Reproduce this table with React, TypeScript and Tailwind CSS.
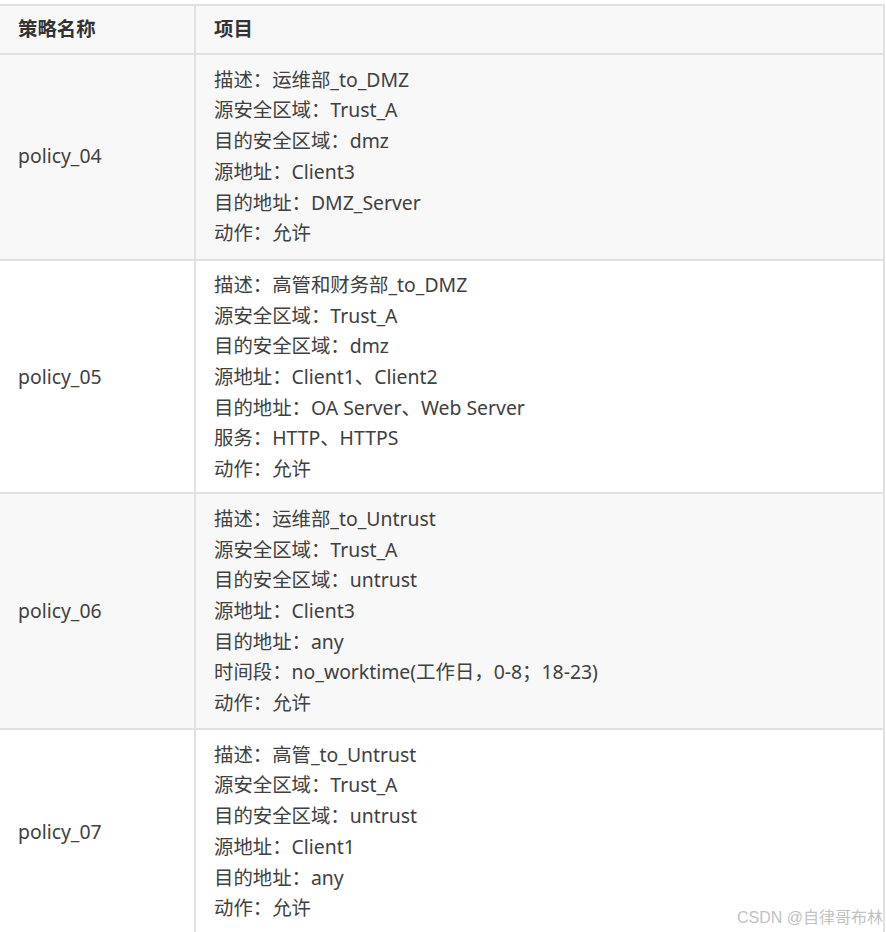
const rows = [
  {
    name: 'policy_04',
    pad: 'pt-[10px] pb-[10px]',
    items: [
      '描述：运维部_to_DMZ',
      '源安全区域：Trust_A',
      '目的安全区域：dmz',
      '源地址：Client3',
      '目的地址：DMZ_Server',
      '动作：允许',
    ],
  },
  {
    name: 'policy_05',
    pad: 'pt-[9px] pb-[7px]',
    items: [
      '描述：高管和财务部_to_DMZ',
      '源安全区域：Trust_A',
      '目的安全区域：dmz',
      '源地址：Client1、Client2',
      '目的地址：OA Server、Web Server',
      '服务：HTTP、HTTPS',
      '动作：允许',
    ],
  },
  {
    name: 'policy_06',
    pad: 'pt-[10px] pb-[9px]',
    items: [
      '描述：运维部_to_Untrust',
      '源安全区域：Trust_A',
      '目的安全区域：untrust',
      '源地址：Client3',
      '目的地址：any',
      '时间段：no_worktime(工作日，0-8；18-23)',
      '动作：允许',
    ],
  },
  {
    name: 'policy_07',
    pad: 'pt-[10px] pb-[9px]',
    items: [
      '描述：高管_to_Untrust',
      '源安全区域：Trust_A',
      '目的安全区域：untrust',
      '源地址：Client1',
      '目的地址：any',
      '动作：允许',
    ],
  },
]

export default function App() {
  return (
    <div
      className="relative h-[932px] w-[886px] overflow-hidden bg-white pt-[4px] text-[19.4px] leading-[30.7px] text-[#404040]"
      style={{ fontFamily: '"Noto Sans", "Noto Sans CJK SC", sans-serif' }}
    >
      <table className="w-[885px] table-fixed border-collapse">
        <colgroup>
          <col className="w-[195px]" />
          <col />
        </colgroup>
        <thead>
          <tr className="bg-[#f8f8f8]">
            <th className="border-2 border-l-0 border-[#dfe2e5] px-[18px] py-[8px] text-left font-bold text-[#333]">
              策略名称
            </th>
            <th className="border-2 border-[#dfe2e5] px-[18px] py-[8px] text-left font-bold text-[#333]">项目</th>
          </tr>
        </thead>
        <tbody>
          {rows.map((row, i) => (
            <tr key={row.name} className={i % 2 === 0 ? 'bg-[#f8f8f8]' : 'bg-white'}>
              <td className={`border-2 border-l-0 border-[#dfe2e5] px-[18px] align-middle ${row.pad}`}>{row.name}</td>
              <td className={`border-2 border-[#dfe2e5] px-[18px] ${row.pad}`}>
                {row.items.map((item) => (
                  <div key={item}>{item}</div>
                ))}
              </td>
            </tr>
          ))}
        </tbody>
      </table>

      <span
        className="absolute right-[3px] bottom-[6px] text-[16px] leading-none text-[#c2c2c2]"
        style={{ fontFamily: '"Liberation Sans", "Noto Sans CJK SC", sans-serif' }}
      >
        CSDN @自律哥布林
      </span>
    </div>
  )
}
